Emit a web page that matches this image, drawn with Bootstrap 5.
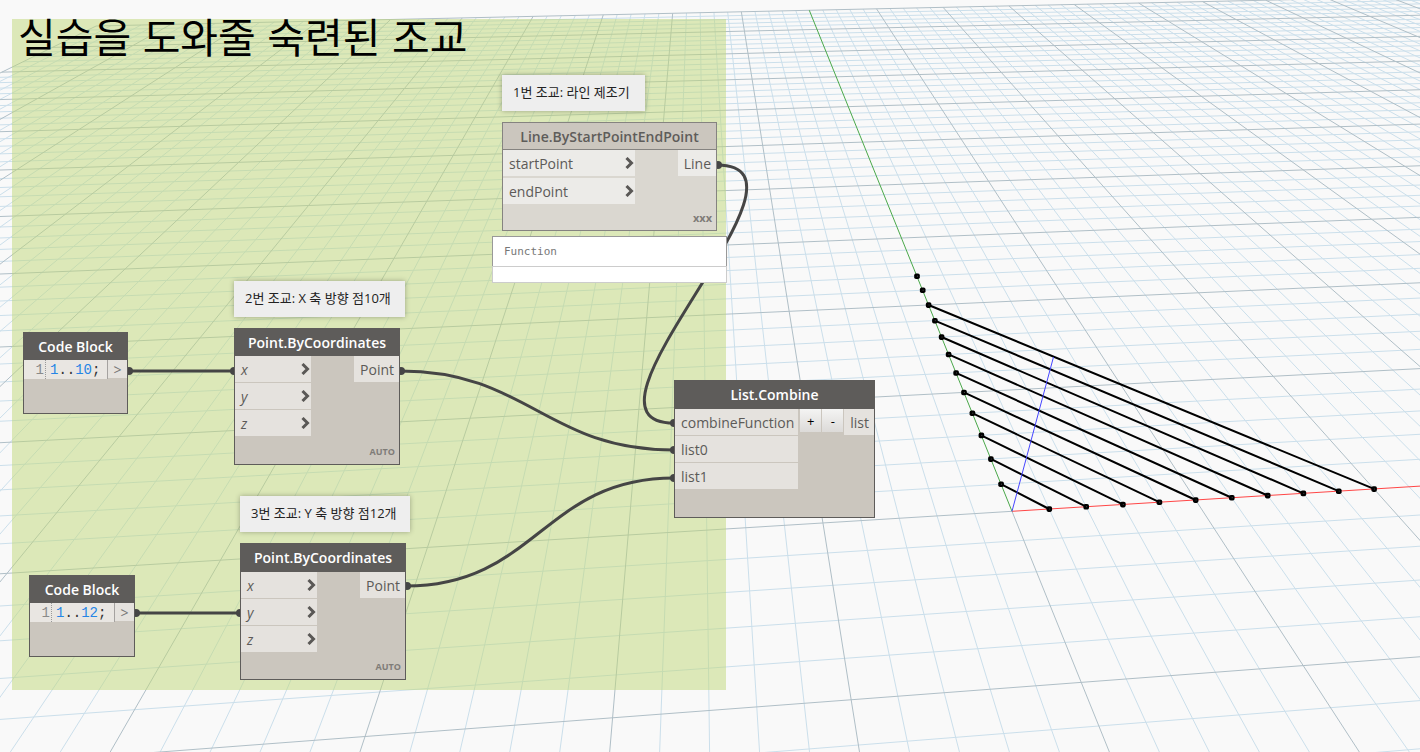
<!DOCTYPE html>
<html lang="ko">
<head>
<meta charset="utf-8">
<meta name="viewport" content="width=device-width, initial-scale=1">
<title>실습을 도와줄 숙련된 조교</title>
<link rel="stylesheet" href="https://cdn.jsdelivr.net/npm/bootstrap@5.3.0/dist/css/bootstrap.min.css">
<style>
  body { background: #f9f9f9; font-family: "Open Sans", "Noto Sans CJK KR", sans-serif; font-size: 14px; line-height: 20px; color: #5c5a58; }

  .group-area { left: 12px; top: 19px; width: 714px; height: 671px; background: rgba(191, 215, 119, .5); }
  .group-title { font: 400 41px/44px "Noto Sans CJK KR", sans-serif; color: #000; padding: 0 6px; margin-top: -6px; }

  .memo { background: #eee; box-shadow: 0 0 5px rgba(0, 0, 0, .3); font-size: 13px; line-height: 20px; color: #222; padding: 7px 11px; height: 36px; }

  .node { background: #cbc6be; border: 1px solid #5e5c5a; --port: #e5e2de; --row-gap: 1px; }
  .node-head { background: #5e5c5a; color: #fff; font-size: 14px; line-height: 20px; font-weight: 600; height: 27px; padding-top: 4px; margin: 0; text-align: center; }
  .node-ports { gap: var(--row-gap); }
  .port { background: var(--port); height: 26px; line-height: 28px; padding: 0 5px 0 6px; }
  .port-in { padding-right: 1px; }
  .port-in svg { margin: auto 0; }
  .node-foot { font-size: 9px; line-height: 12px; font-weight: 700; color: #7f7c78; padding: 0 4px 6px; }
  .idle { background: #dad7d0; border-color: #858380; --port: #ecebe8; --row-gap: 2px; }
  .idle .node-head { background: #cbc6be; color: #5e5c5a; border-bottom: 1px solid #858380; }
  .idle .node-foot { font-size: 11px; }

  .code { font-family: "Liberation Mono", monospace; font-size: 14px; line-height: 20px; height: 19px; background: #e9e6e2; border-right: 1px solid #a5a2a0; color: #333; }
  .code-line { color: #8a8a8a; border-right: 1px dotted #999; width: 22px; padding-right: 1px; }
  .code-num { color: #2585e5; }
  .code-out { background: var(--port); height: 18px; width: 19px; line-height: 20px; color: #777; }

  .step { border: 0; border-right: 1px solid #cbc6be; width: 22px; height: 23px; line-height: 20px; background: linear-gradient(#f4f4f3, #dcdad8); color: #000; font-size: 13px; }

  .preview { background: #fff; border: 1px solid #999; border-bottom: 0; }
  .preview-text { font-family: "DejaVu Sans Mono", monospace; font-size: 11px; line-height: 29px; color: #777; padding: 0 11px; }
  .preview-bar { height: 17px; border: 1px solid #ccc; margin: 0 -1px; }

  #memo-line { left: 502px; top: 75px; width: 143px; }
  #memo-x { left: 234px; top: 281px; width: 171px; }
  #memo-y { left: 240px; top: 496px; width: 170px; }
  #node-line { left: 502px; top: 122px; width: 215px; height: 109px; }
  #node-preview { left: 492px; top: 236px; width: 235px; }
  #node-code-x { left: 23px; top: 332px; width: 105px; height: 82px; }
  #node-code-y { left: 29px; top: 575px; width: 106px; height: 82px; }
  #node-point-x { left: 234px; top: 328px; width: 166px; height: 137px; }
  #node-point-y { left: 240px; top: 543px; width: 166px; height: 137px; }
  #node-combine { left: 674px; top: 380px; width: 201px; height: 138px; }
  #node-point-y .node-head, #node-combine .node-head { height: 28px; }
  .w-point { width: 76px; }
  .w-line { width: 132px; }
  .w-combine { width: 123px; }
</style>
</head>
<body>
<main class="position-relative vh-100 overflow-hidden">
  <svg id="scene" class="position-absolute top-0 start-0 w-100 h-100" fill="none" aria-hidden="true"></svg>

  <section class="group-area position-absolute">
    <h1 class="group-title">실습을 도와줄 숙련된 조교</h1>
  </section>

  <svg id="wires" class="position-absolute top-0 start-0 w-100 h-100" fill="none" stroke="#454545" stroke-width="3" aria-hidden="true"></svg>

  <div class="memo position-absolute text-nowrap" id="memo-line">1번 조교: 라인 제조기</div>
  <div class="memo position-absolute text-nowrap" id="memo-x">2번 조교: X 축 방향 점10개</div>
  <div class="memo position-absolute text-nowrap" id="memo-y">3번 조교: Y 축 방향 점12개</div>

  <article class="node idle position-absolute d-flex flex-column" id="node-line">
    <h2 class="node-head">Line.ByStartPointEndPoint</h2>
    <div class="d-flex justify-content-between align-items-start">
      <div class="node-ports w-line d-flex flex-column">
        <div class="port port-in d-flex justify-content-between">startPoint<svg width="9" height="12" viewBox="0 0 9 12"><path d="M1.5 1L6.5 6L1.5 11" fill="none" stroke="#5a5856" stroke-width="3"/></svg></div>
        <div class="port port-in d-flex justify-content-between">endPoint<svg width="9" height="12" viewBox="0 0 9 12"><path d="M1.5 1L6.5 6L1.5 11" fill="none" stroke="#5a5856" stroke-width="3"/></svg></div>
      </div>
      <div class="port">Line</div>
    </div>
    <div class="node-foot mt-auto text-end">xxx</div>
  </article>

  <article class="preview position-absolute" id="node-preview">
    <div class="preview-text">Function</div>
    <div class="preview-bar"></div>
  </article>

  <article class="node position-absolute" id="node-code-x">
    <h2 class="node-head">Code Block</h2>
    <div class="d-flex">
      <div class="code d-flex flex-fill"><span class="code-line text-end">1</span><span class="ps-1 text-nowrap"><span class="code-num">1</span>..<span class="code-num">10</span>;</span></div>
      <div class="code-out text-center">&gt;</div>
    </div>
  </article>

  <article class="node position-absolute" id="node-code-y">
    <h2 class="node-head">Code Block</h2>
    <div class="d-flex">
      <div class="code d-flex flex-fill"><span class="code-line text-end">1</span><span class="ps-1 text-nowrap"><span class="code-num">1</span>..<span class="code-num">12</span>;</span></div>
      <div class="code-out text-center">&gt;</div>
    </div>
  </article>

  <article class="node position-absolute d-flex flex-column" id="node-point-x">
    <h2 class="node-head">Point.ByCoordinates</h2>
    <div class="d-flex justify-content-between align-items-start">
      <div class="node-ports w-point d-flex flex-column fst-italic">
        <div class="port port-in d-flex justify-content-between">x<svg width="9" height="12" viewBox="0 0 9 12"><path d="M1.5 1L6.5 6L1.5 11" fill="none" stroke="#5a5856" stroke-width="3"/></svg></div>
        <div class="port port-in d-flex justify-content-between">y<svg width="9" height="12" viewBox="0 0 9 12"><path d="M1.5 1L6.5 6L1.5 11" fill="none" stroke="#5a5856" stroke-width="3"/></svg></div>
        <div class="port port-in d-flex justify-content-between">z<svg width="9" height="12" viewBox="0 0 9 12"><path d="M1.5 1L6.5 6L1.5 11" fill="none" stroke="#5a5856" stroke-width="3"/></svg></div>
      </div>
      <div class="port">Point</div>
    </div>
    <div class="node-foot mt-auto text-end">AUTO</div>
  </article>

  <article class="node position-absolute d-flex flex-column" id="node-point-y">
    <h2 class="node-head">Point.ByCoordinates</h2>
    <div class="d-flex justify-content-between align-items-start">
      <div class="node-ports w-point d-flex flex-column fst-italic">
        <div class="port port-in d-flex justify-content-between">x<svg width="9" height="12" viewBox="0 0 9 12"><path d="M1.5 1L6.5 6L1.5 11" fill="none" stroke="#5a5856" stroke-width="3"/></svg></div>
        <div class="port port-in d-flex justify-content-between">y<svg width="9" height="12" viewBox="0 0 9 12"><path d="M1.5 1L6.5 6L1.5 11" fill="none" stroke="#5a5856" stroke-width="3"/></svg></div>
        <div class="port port-in d-flex justify-content-between">z<svg width="9" height="12" viewBox="0 0 9 12"><path d="M1.5 1L6.5 6L1.5 11" fill="none" stroke="#5a5856" stroke-width="3"/></svg></div>
      </div>
      <div class="port">Point</div>
    </div>
    <div class="node-foot mt-auto text-end">AUTO</div>
  </article>

  <article class="node position-absolute" id="node-combine">
    <h2 class="node-head">List.Combine</h2>
    <div class="d-flex align-items-start">
      <div class="node-ports w-combine d-flex flex-column">
        <div class="port">combineFunction</div>
        <div class="port">list0</div>
        <div class="port">list1</div>
      </div>
      <div class="d-flex ms-auto">
        <button type="button" class="step p-0" aria-label="Add input">+</button>
        <button type="button" class="step p-0" aria-label="Remove input">-</button>
      </div>
      <div class="port">list</div>
    </div>
  </article>
</main>

<script src="https://cdn.jsdelivr.net/npm/bootstrap@5.3.0/dist/js/bootstrap.bundle.min.js"></script>
<script>
  // Perspective projection of the ground plane (u along X, v along Y) to the screen
  function project(u, v) {
    const w = 1 + 0.002926 * u + 0.036 * v;
    return [(1012 + 40.22 * u + 25.08 * v) / w, (511.3 - 0.804 * u - 9.65 * v) / w];
  }
  function segment(a, b) {
    return 'M' + a.map(n => n.toFixed(2)).join(' ') + 'L' + b.map(n => n.toFixed(2)).join(' ');
  }
  function path(d, stroke, width) {
    return `<path d="${d}" stroke="${stroke}" stroke-width="${width}"/>`;
  }

  const SIZE = 50, NEAR = -14;
  let minor = '', major = '';
  for (let i = -SIZE; i <= SIZE; i++) {
    const along = i === 0 ? segment(project(0, NEAR), project(0, 0)) : segment(project(i, NEAR), project(i, SIZE));
    if (i % 5 === 0) major += along; else minor += along;
    if (i < NEAR) continue;
    const across = segment(project(-SIZE, i), project(i === 0 ? 0 : SIZE, i));
    if (i % 5 === 0) major += across; else minor += across;
  }
  const origin = project(0, 0);
  let scene = path(minor, '#cbdfeb', 1) + path(major, '#b0bfc7', 1);
  scene += path(segment(origin, project(SIZE, 0)), '#ff4646', 1);
  scene += path(segment(origin, project(0, SIZE)), '#4aa84a', 1);

  let lines = '', dots = '';
  const dot = ([x, y]) => `<rect x="${(x - 2.7).toFixed(1)}" y="${(y - 2.7).toFixed(1)}" width="5.6" height="5.6" rx="1.8" fill="#000"/><circle cx="${(x + .5).toFixed(1)}" cy="${y.toFixed(1)}" r=".6" fill="#444"/>`;
  for (let i = 1; i <= 12; i++) {
    dots += dot(project(0, i));
    if (i <= 10) {
      dots += dot(project(i, 0));
      lines += segment(project(0, i), project(i, 0));
    }
  }
  scene += path(lines, '#000', 2) + path(segment(origin, [1053.5, 357]), '#4545ff', 1) + dots;
  document.getElementById('scene').innerHTML = scene;

  // Wires between ports: [x1, y1, x2, y2]
  const wires = [[128, 371, 234, 371], [135, 613, 240, 613], [400, 371, 674, 450], [406, 586, 674, 478], [717, 165, 674, 423]];
  document.getElementById('wires').innerHTML = wires.map(([x1, y1, x2, y2]) => {
    const k = 0.45 * Math.hypot(x2 - x1, y2 - y1);
    return `<path d="M${x1} ${y1}C${x1 + k} ${y1} ${x2 - k} ${y2} ${x2} ${y2}"/>` +
      `<g stroke="none" fill="#454545"><circle cx="${x1 + 1}" cy="${y1}" r="4"/><circle cx="${x2}" cy="${y2}" r="4"/></g>`;
  }).join('');
</script>
</body>
</html>
